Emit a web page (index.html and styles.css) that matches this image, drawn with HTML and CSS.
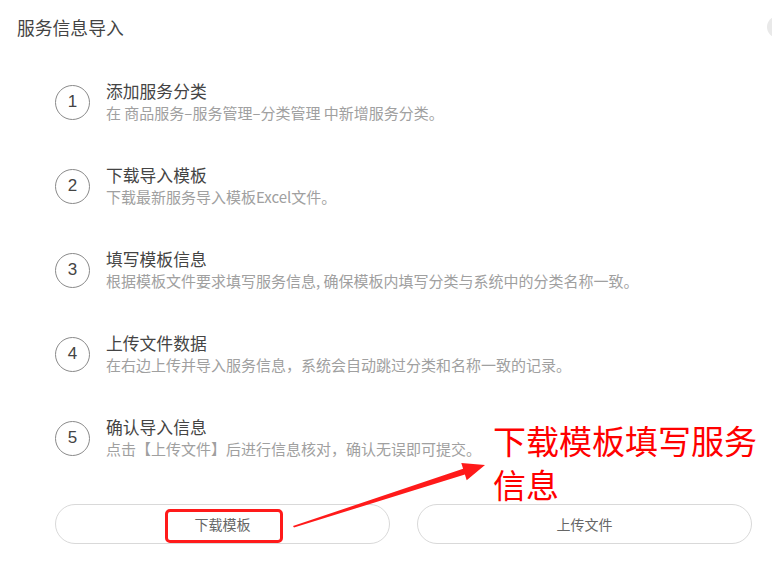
FILE: index.html
```html
<!DOCTYPE html>
<html lang="zh-CN">
<head>
  <meta charset="UTF-8" />
  <meta name="viewport" content="width=device-width, initial-scale=1.0" />
  <title>服务信息导入</title>
  <link rel="stylesheet" href="styles.css">
</head>
<body>
  <div class="page">
    <header class="top">
      <h1>服务信息导入</h1>
      <span class="close-dot"></span>
    </header>

    <ul class="steps">
      <li class="step">
        <span class="num">1</span>
        <div class="text">
          <h3>添加服务分类</h3>
          <p>在 商品服务–服务管理–分类管理 中新增服务分类。</p>
        </div>
      </li>
      <li class="step">
        <span class="num">2</span>
        <div class="text">
          <h3>下载导入模板</h3>
          <p>下载最新服务导入模板Excel文件。</p>
        </div>
      </li>
      <li class="step">
        <span class="num">3</span>
        <div class="text">
          <h3>填写模板信息</h3>
          <p>根据模板文件要求填写服务信息, 确保模板内填写分类与系统中的分类名称一致。</p>
        </div>
      </li>
      <li class="step">
        <span class="num">4</span>
        <div class="text">
          <h3>上传文件数据</h3>
          <p>在右边上传并导入服务信息，系统会自动跳过分类和名称一致的记录。</p>
        </div>
      </li>
      <li class="step">
        <span class="num">5</span>
        <div class="text">
          <h3>确认导入信息</h3>
          <p>点击【上传文件】后进行信息核对，确认无误即可提交。</p>
        </div>
      </li>
    </ul>

    <div class="actions">
      <button class="btn">下载模板<span class="mark"></span></button>
      <button class="btn">上传文件</button>
    </div>

    <!-- annotation drawn over the screenshot -->
    <div class="note">下载模板填写服务信息</div>
    <svg class="arrow" width="772" height="575" viewBox="0 0 772 575">
      <polygon fill="#ff1a1a" points="293,526 463.1,468.8 461.3,463.1 485,465 466.7,480.3 464.9,474.6 294,527.5" />
    </svg>
  </div>
</body>
</html>
```

FILE: styles.css
```css
html, body {
  margin: 0;
  padding: 0;
  background: #fff;
  font-family: "Noto Sans CJK SC", "Noto Sans", sans-serif;
  overflow: hidden;
}
.page {
  position: relative;
  width: 772px;
  height: 575px;
  overflow: hidden;
}
.top {
  display: flex;
  justify-content: space-between;
  align-items: center;
  padding: 14px 0 0 17px;
  height: 26px;
}
.top h1 {
  margin: 0;
  font-size: 17.8px;
  font-weight: normal;
  color: #444;
  line-height: 26px;
}
.close-dot {
  width: 22px;
  height: 22px;
  border-radius: 50%;
  background: #e9e9e9;
  margin-right: -17px;
}
.steps {
  list-style: none;
  margin: 40px 0 0;
  padding: 0 0 0 55px;
  display: flex;
  flex-direction: column;
  gap: 40px;
}
.step {
  display: flex;
  align-items: center;
  gap: 16px;
}
.num {
  width: 33px;
  height: 33px;
  border: 1px solid #8a8a8a;
  border-radius: 50%;
  display: flex;
  align-items: center;
  justify-content: center;
  font-size: 17px;
  color: #444;
  font-family: "Liberation Sans", sans-serif;
}
.text h3 {
  margin: 0;
  font-size: 16.8px;
  font-weight: normal;
  color: #444;
  line-height: 22px;
}
.text p {
  margin: 0;
  font-size: 15px;
  color: #a0a0a0;
  line-height: 22px;
}
.actions {
  display: flex;
  gap: 27px;
  padding: 44px 20px 0 55px;
}
.btn {
  position: relative;
  width: 335px;
  height: 40px;
  border: 1px solid #d9d9d9;
  border-radius: 20px;
  background: #fff;
  color: #666;
  font-family: inherit;
  font-size: 14px;
  padding: 0;
}
.mark {
  position: absolute;
  left: 50%;
  top: 4px;
  width: 112px;
  height: 28px;
  margin-left: -57.5px;
  border: 3px solid #ff1a1a;
  border-radius: 5px;
}
.note {
  position: absolute;
  left: 493px;
  top: 418px;
  width: 274px;
  font-size: 33px;
  line-height: 44px;
  color: #ff0000;
}
.arrow {
  position: absolute;
  left: 0;
  top: 0;
  pointer-events: none;
}
```
